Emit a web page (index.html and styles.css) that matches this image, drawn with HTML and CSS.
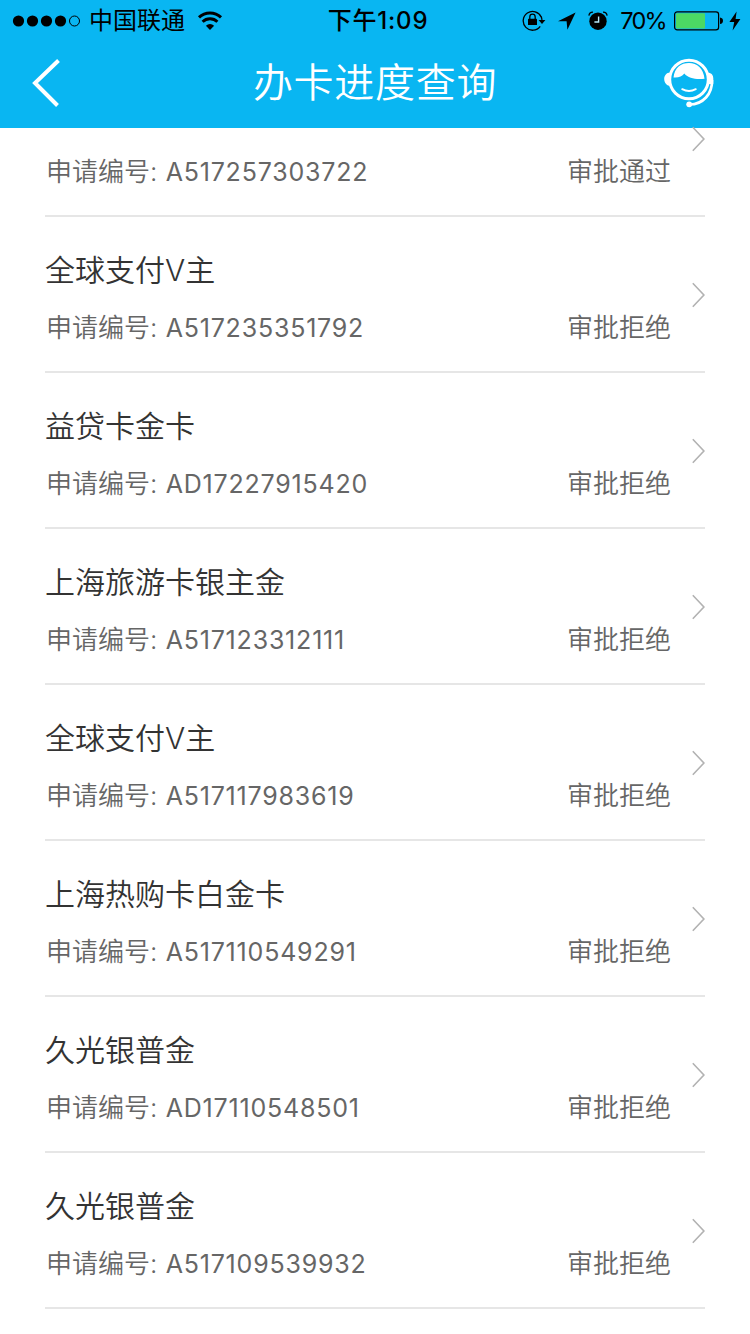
FILE: index.html
```html
<!DOCTYPE html>
<html lang="zh-CN">
<head>
    <meta charset="UTF-8">
    <meta name="viewport" content="width=device-width, initial-scale=1.0">
    <title>办卡进度查询</title>
    <link rel="stylesheet" href="styles.css">
</head>
<body>
    <svg class="symbols" width="0" height="0">
        <symbol id="arrow" viewBox="0 0 14 26">
            <path d="M1.8 1.2 L12.9 13 L1.8 24.8" fill="none" stroke="#b2b2b2" stroke-width="1.6"/>
        </symbol>
    </svg>

    <header class="header">
        <div class="status-bar">
            <div class="status-left">
                <svg class="signal" width="70" height="14" viewBox="0 0 70 14">
                    <circle cx="6.5" cy="7" r="5.6"/>
                    <circle cx="20.5" cy="7" r="5.6"/>
                    <circle cx="34.5" cy="7" r="5.6"/>
                    <circle cx="48.5" cy="7" r="5.6"/>
                    <circle cx="62.5" cy="7" r="5" fill="none" stroke="#000" stroke-width="1"/>
                </svg>
                <span class="carrier">中国联通</span>
                <svg class="wifi" width="26" height="20" viewBox="0 0 26 20">
                    <path d="M2 6.4 A16 16 0 0 1 24 6.4" fill="none" stroke="#000" stroke-width="3"/>
                    <path d="M5.6 10.8 A10.6 10.6 0 0 1 20.4 10.8" fill="none" stroke="#000" stroke-width="2.9"/>
                    <path d="M13 19 L8.9 14.7 A6 6 0 0 1 17.1 14.7 Z"/>
                </svg>
            </div>
            <div class="time">下午1:09</div>
            <div class="status-right">
                <svg class="lock" width="24" height="22" viewBox="0 0 24 22">
                    <path d="M19.2 7 A9.4 9.4 0 1 0 18.2 16.4" fill="none" stroke="#000" stroke-width="1.3"/>
                    <path d="M16.6 10 H23.4 L20 14 Z"/>
                    <path d="M19.2 6.5 Q20 8.5 20 11" fill="none" stroke="#000" stroke-width="1.3"/>
                    <rect x="6" y="8.7" width="9" height="6.3" rx=".6"/>
                    <path d="M7.8 9 V6.9 A2.7 2.7 0 0 1 13.2 6.9 V9" fill="none" stroke="#000" stroke-width="1.3"/>
                </svg>
                <svg class="location" width="18" height="18" viewBox="0 0 18 18">
                    <path d="M17.6 .4 L0 9.2 H8.6 L9.4 17.8 Z"/>
                </svg>
                <svg class="alarm" width="20" height="20" viewBox="0 0 20 20">
                    <circle cx="10" cy="10.2" r="8.7"/>
                    <path d="M.9 4.6 A4 4 0 0 1 5 1.1 M19.1 4.6 A4 4 0 0 0 15 1.1" fill="none" stroke="#000" stroke-width="1.3"/>
                    <path d="M10.6 5.5 V11 H6.4" fill="none" stroke="#b5e8fa" stroke-width="1.4"/>
                </svg>
                <span class="percent">70%</span>
                <svg class="battery" width="49" height="20" viewBox="0 0 49 20">
                    <rect x=".6" y=".8" width="44" height="18" rx="2.6" fill="none" stroke="#000" stroke-width="1.2"/>
                    <rect x="2" y="2.2" width="29" height="15.2" rx="1" fill="#4cd964"/>
                    <path d="M46 6.5 Q49 7 49 9.8 T46 13.1 Z"/>
                </svg>
                <svg class="bolt" width="12" height="20" viewBox="0 0 12 20">
                    <path d="M7.6 .4 L.4 11 H5.2 L3.6 19.4 L11.4 8 H6.6 Z"/>
                </svg>
            </div>
        </div>
        <div class="nav">
            <svg class="back" width="28" height="48" viewBox="0 0 28 48">
                <path d="M26.5 1.5 L3 24 L25.5 46.5" fill="none" stroke="#fff" stroke-width="4"/>
            </svg>
            <h1 class="title">办卡进度查询</h1>
            <svg class="service" width="50" height="50" viewBox="0 0 50 50">
                <circle cx="25" cy="21.5" r="19.3" fill="none" stroke="#fff" stroke-width="3"/>
                <path d="M6.5 14.5 C2 14.5 .2 18 .2 21 C.2 24.5 2.5 28 7 28 Q4.5 21 6.5 14.5 Z" fill="#fff"/>
                <path d="M43.5 14.5 C48 15 49.3 17.5 49.3 20.5 V26 H43 Q45.5 21 43.5 14.5 Z" fill="#fff"/>
                <path d="M9.5 19.5 C10.5 9.5 17 5 25 5 C33 5 39.5 10.5 40.5 20.8 C32 21.7 24.5 20.5 20.3 15.5 C18 18.5 14.5 20 9.5 19.5 Z" fill="#fff"/>
                <path d="M18.2 31.2 Q25 34.7 31.8 31.2" fill="none" stroke="#fff" stroke-width="1.9" stroke-linecap="round"/>
                <path d="M48 22 C48.5 36 39 46.5 25.5 46.5" fill="none" stroke="#fff" stroke-width="2.7"/>
                <circle cx="25.2" cy="46.3" r="2.9" fill="#fff"/>
            </svg>
        </div>
    </header>

    <main class="list">
        <div class="item item-first">
            <div class="info">
                <div class="detail"><span>申请编号: <span class="number">A517257303722</span></span><span class="result">审批通过</span></div>
            </div>
            <svg class="arrow"><use href="#arrow"/></svg>
        </div>
        <div class="item">
            <div class="info">
                <div class="name">全球支付V主</div>
                <div class="detail"><span>申请编号: <span class="number">A517235351792</span></span><span class="result">审批拒绝</span></div>
            </div>
            <svg class="arrow"><use href="#arrow"/></svg>
        </div>
        <div class="item">
            <div class="info">
                <div class="name">益贷卡金卡</div>
                <div class="detail"><span>申请编号: <span class="number">AD17227915420</span></span><span class="result">审批拒绝</span></div>
            </div>
            <svg class="arrow"><use href="#arrow"/></svg>
        </div>
        <div class="item">
            <div class="info">
                <div class="name">上海旅游卡银主金</div>
                <div class="detail"><span>申请编号: <span class="number">A517123312111</span></span><span class="result">审批拒绝</span></div>
            </div>
            <svg class="arrow"><use href="#arrow"/></svg>
        </div>
        <div class="item">
            <div class="info">
                <div class="name">全球支付V主</div>
                <div class="detail"><span>申请编号: <span class="number">A517117983619</span></span><span class="result">审批拒绝</span></div>
            </div>
            <svg class="arrow"><use href="#arrow"/></svg>
        </div>
        <div class="item">
            <div class="info">
                <div class="name">上海热购卡白金卡</div>
                <div class="detail"><span>申请编号: <span class="number">A517110549291</span></span><span class="result">审批拒绝</span></div>
            </div>
            <svg class="arrow"><use href="#arrow"/></svg>
        </div>
        <div class="item">
            <div class="info">
                <div class="name">久光银普金</div>
                <div class="detail"><span>申请编号: <span class="number">AD17110548501</span></span><span class="result">审批拒绝</span></div>
            </div>
            <svg class="arrow"><use href="#arrow"/></svg>
        </div>
        <div class="item">
            <div class="info">
                <div class="name">久光银普金</div>
                <div class="detail"><span>申请编号: <span class="number">A517109539932</span></span><span class="result">审批拒绝</span></div>
            </div>
            <svg class="arrow"><use href="#arrow"/></svg>
        </div>
    </main>
</body>
</html>
```

FILE: styles.css
```css
body {
    margin: 0;
    height: 1334px;
    overflow: hidden;
    background-color: #fff;
    font-family: Inter, "Noto Sans CJK SC", sans-serif;
    font-weight: 350;
}
svg {
    display: block;
    flex-shrink: 0;
}
.symbols {
    display: none;
}
.header {
    height: 128px;
    background-color: #09b6f2;
}
.status-bar {
    display: grid;
    grid-template-columns: 1fr auto 1fr;
    align-items: center;
    height: 41px;
    padding: 0 9px 0 12px;
    color: #000;
    font-size: 24px;
    line-height: 41px;
}
.status-left,
.status-right {
    display: flex;
    align-items: center;
}
.status-right {
    justify-content: flex-end;
}
.carrier {
    margin: 0 12px 0 7px;
    font-weight: 400;
}
.time {
    padding-left: 3px;
    font-weight: 500;
    letter-spacing: 0.8px;
}
.location {
    margin-left: 12px;
}
.alarm {
    margin-left: 12px;
}
.percent {
    margin: 0 8px 0 12px;
    font-size: 23.5px;
    font-weight: 400;
    letter-spacing: -1.7px;
}
.bolt {
    margin-left: 6px;
}
.nav {
    display: grid;
    grid-template-columns: 50px 1fr 50px;
    align-items: center;
    height: 84px;
    padding: 0 36px 0 32px;
}
.title {
    margin: 0;
    color: #fff;
    font-size: 40px;
    font-weight: 350;
    letter-spacing: 0.7px;
    line-height: 60px;
    text-align: center;
    text-indent: 4px;
}
.item {
    display: flex;
    align-items: center;
    box-sizing: border-box;
    height: 156px;
    margin: 0 45px;
    padding-top: 2px;
    border-bottom: 2px solid #e6e6e6;
}
.item-first {
    height: 89px;
    padding-top: 0;
}
.info {
    flex-grow: 1;
}
.name {
    height: 42px;
    margin: 6px 0 18px;
    color: #333;
    font-size: 30px;
    line-height: 42px;
}
.detail {
    display: flex;
    justify-content: space-between;
    height: 38px;
    margin: 0 20px 0 1px;
    color: #666;
    font-size: 26px;
    line-height: 38px;
}
.number {
    margin-left: 1px;
    font-size: 25px;
    font-weight: 400;
    letter-spacing: 0.8px;
}
.arrow {
    width: 14px;
    height: 26px;
}
.item-first .arrow {
    align-self: flex-start;
    margin-top: -2px;
}
```
